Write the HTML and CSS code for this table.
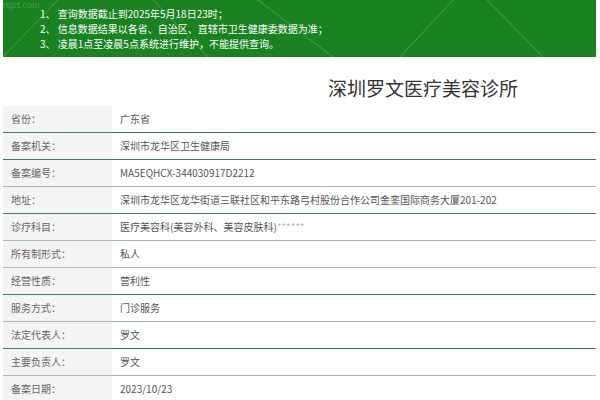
FILE: index.html
```html
<!DOCTYPE html>
<html lang="zh">
<head>
<meta charset="utf-8">
<link rel="stylesheet" href="styles.css">
</head>
<body>
<div class="page">
  <div class="notice">
    <svg class="deco" width="593" height="57" viewBox="0 0 593 57">
      <g stroke="#5fae63" stroke-width="1" fill="none" opacity="0.7">
        <line x1="-5" y1="62" x2="55" y2="0"/>
        <line x1="150" y1="0" x2="205" y2="57"/>
        <line x1="255" y1="0" x2="330" y2="57"/>
        <line x1="397" y1="57" x2="450" y2="0"/>
        <line x1="484" y1="0" x2="540" y2="57"/>
      </g>
    </svg>
    <div class="wm">ngzt.com</div>
    <p class="line">1、 查询数据截止到2025年5月18日23时；</p>
    <p class="line">2、 信息数据结果以各省、自治区、直辖市卫生健康委数据为准；</p>
    <p class="line">3、 凌晨1点至凌晨5点系统进行维护，不能提供查询。</p>
  </div>
  <h1 class="title">深圳罗文医疗美容诊所</h1>
  <div class="table">
    <div class="row dark"><div class="k">省份：</div><div class="v">广东省</div></div>
    <div class="row dark"><div class="k">备案机关：</div><div class="v">深圳市龙华区卫生健康局</div></div>
    <div class="row light"><div class="k">备案编号：</div><div class="v">MA5EQHCX-344030917D2212</div></div>
    <div class="row dark"><div class="k">地址：</div><div class="v">深圳市龙华区龙华街道三联社区和平东路弓村股份合作公司金銮国际商务大厦201-202</div></div>
    <div class="row light"><div class="k">诊疗科目：</div><div class="v">医疗美容科(美容外科、美容皮肤科)<span class="stars">******</span></div></div>
    <div class="row light"><div class="k">所有制形式：</div><div class="v">私人</div></div>
    <div class="row dark"><div class="k">经营性质：</div><div class="v">营利性</div></div>
    <div class="row light"><div class="k">服务方式：</div><div class="v">门诊服务</div></div>
    <div class="row dark"><div class="k">法定代表人：</div><div class="v">罗文</div></div>
    <div class="row light"><div class="k">主要负责人：</div><div class="v">罗文</div></div>
    <div class="row none"><div class="k">备案日期：</div><div class="v">2023/10/23</div></div>
  </div>
</div>
</body>
</html>
```
FILE: styles.css
```css
html, body {
  margin: 0;
  padding: 0;
  background: #fff;
}
body {
  font-family: "Noto Sans CJK SC", "Noto Sans", sans-serif;
  color: #555;
}
.page {
  width: 593px;
  margin-left: 3px;
}
.notice {
  position: relative;
  height: 57px;
  background: #1a8220;
  box-sizing: border-box;
  padding: 6px 0 0 37px;
  overflow: hidden;
}
.deco {
  position: absolute;
  left: 0;
  top: 0;
}
.wm {
  position: absolute;
  left: 0;
  top: 0;
  font-family: "Liberation Sans", sans-serif;
  font-size: 9px;
  line-height: 10px;
  color: rgba(255, 255, 255, 0.22);
}
.line {
  position: relative;
  margin: 0;
  font-size: 10px;
  line-height: 15px;
  color: #fff;
  white-space: nowrap;
}
.title {
  margin: 0;
  height: 49px;
  box-sizing: border-box;
  padding: 19px 0 0 325px;
  font-size: 19px;
  line-height: 24px;
  font-weight: normal;
  color: #333;
  white-space: nowrap;
}
.table {
  display: flex;
  flex-direction: column;
}
.row {
  display: flex;
  height: 27px;
  box-sizing: border-box;
  font-size: 10px;
  line-height: 26px;
}
.row.dark { border-bottom: 1px solid #3f7a5e; }
.row.light { border-bottom: 1px solid #a3bdb0; }
.row.none { border-bottom: 1px solid transparent; }
.k {
  width: 109px;
  flex: none;
  box-sizing: border-box;
  padding-left: 8px;
  background: #f4f4f4;
  color: #666;
}
.v {
  padding-left: 8px;
  color: #555;
  white-space: nowrap;
}
.stars {
  color: #bbb;
}
```
